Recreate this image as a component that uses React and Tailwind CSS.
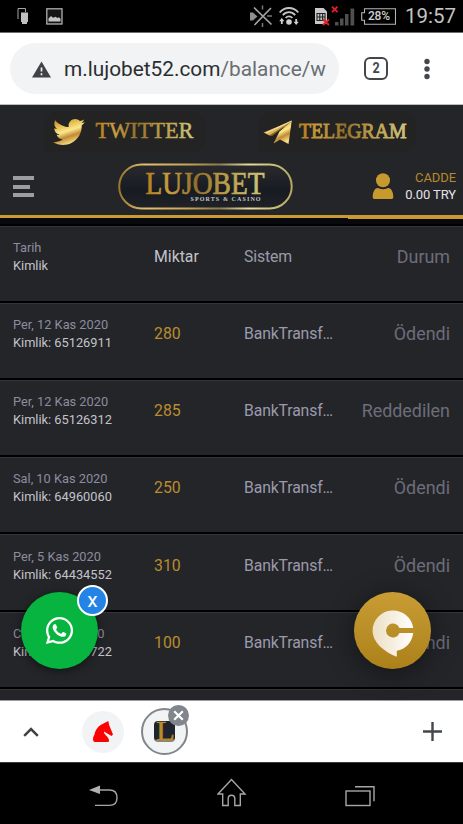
import React from 'react';
import { FaTwitter, FaWhatsapp } from 'react-icons/fa';

const transactions = [
  { date: 'Per, 12 Kas 2020', id: '65126911', amount: '280', system: 'BankTransf…', status: 'Ödendi' },
  { date: 'Per, 12 Kas 2020', id: '65126312', amount: '285', system: 'BankTransf…', status: 'Reddedilen' },
  { date: 'Sal, 10 Kas 2020', id: '64960060', amount: '250', system: 'BankTransf…', status: 'Ödendi' },
  { date: 'Per, 5 Kas 2020', id: '64434552', amount: '310', system: 'BankTransf…', status: 'Ödendi' },
  { date: 'Cum, 9 Eki 2020', id: '62518722', amount: '100', system: 'BankTransf…', status: 'Ödendi' },
];

// Shared gradients for all gold artwork
const Gradients = () => (
  <svg width="0" height="0" className="absolute">
    <defs>
      <linearGradient id="gold" x1="0" y1="0" x2="1" y2="0">
        <stop offset="0" stopColor="#b57d1e" />
        <stop offset="0.2" stopColor="#c99e40" />
        <stop offset="0.42" stopColor="#94702a" />
        <stop offset="0.65" stopColor="#b99a45" />
        <stop offset="1" stopColor="#cfc47c" />
      </linearGradient>
      <linearGradient id="goldIcon" x1="0" y1="0" x2="0.4" y2="1">
        <stop offset="0" stopColor="#b07c22" />
        <stop offset="0.3" stopColor="#e3b94c" />
        <stop offset="0.55" stopColor="#fbe88a" />
        <stop offset="0.75" stopColor="#c28a35" />
        <stop offset="1" stopColor="#f5dc85" />
      </linearGradient>
      <linearGradient id="rim" x1="0" y1="0" x2="1" y2="0">
        <stop offset="0" stopColor="#9b762c" />
        <stop offset="0.15" stopColor="#e2c070" />
        <stop offset="0.4" stopColor="#c9a550" />
        <stop offset="0.58" stopColor="#8a7a50" />
        <stop offset="0.75" stopColor="#e9dc9c" />
        <stop offset="1" stopColor="#b6a964" />
      </linearGradient>
      <linearGradient id="badge" x1="0" y1="0" x2="0" y2="1">
        <stop offset="0" stopColor="#292a2c" />
        <stop offset="0.6" stopColor="#171b22" />
        <stop offset="1" stopColor="#202226" />
      </linearGradient>
      <linearGradient id="chat" x1="0" y1="0" x2="1" y2="0">
        <stop offset="0" stopColor="#ecdfc3" />
        <stop offset="1" stopColor="#ffffff" />
      </linearGradient>
    </defs>
  </svg>
);

const StatusBar = () => (
  <div className="h-[33px] bg-black border-b border-[#6c6c6c] flex items-center shrink-0 pl-[17px] pr-[7px]">
    <svg width="12" height="18" viewBox="0 0 12 18">
      <path d="M1 12V1.5h7.5V5" fill="none" stroke="#a5a5a5" />
      <path d="M4 5.5h7V15H10v2H5v-2H4z" fill="#c0c0c0" />
    </svg>
    <svg width="17" height="17" viewBox="0 0 17 17" className="ml-[17px]">
      <rect x="0.8" y="0.8" width="15.2" height="15.2" fill="#151515" stroke="#b0b0b0" strokeWidth="1.3" />
      <path d="M2.5 13.5v-3l2.5-2.5 2 1.8 2.5-1 2 1.2 1.5-.8 1.5 1.5v2.8z" fill="#c4c4c4" />
    </svg>
    <div className="ml-auto flex items-center">
      <svg width="24" height="22" viewBox="0 0 24 22">
        <path d="M1 7.5h3L8.5 11.5 4 15.5H1z" fill="#8f8f8f" />
        <path d="M5 2.500l17.500 17M22 3L5.500 20" stroke="#a2a2a2" strokeWidth="1.7" />
        <path d="M13.5 .5v4M13.5 18v4M18 11h5" stroke="#777" strokeWidth="1.5" />
      </svg>
      <svg width="20" height="20" viewBox="0 0 20 20" className="ml-[6px]">
        <g fill="none" stroke="#c4c4c4" strokeWidth="1.8">
          <path d="M.7 6.5c5-6 13.6-6 18.6 0" />
          <path d="M3.8 9.2c3.5-4 8.900-4 12.400 0" />
          <path d="M6.600 12c2-2.300 4.800-2.300 6.800 0" />
        </g>
        <circle cx="10" cy="16" r="2.8" fill="#d0d0d0" />
        <path d="M2.800 12l-2.600 3.200h1.700V18h1.800v-2.800h1.700zM17.200 19l-2.600-3.200h1.700V13h1.800v2.800h1.700z" fill="#d0d0d0" />
      </svg>
      <svg width="43" height="22" viewBox="0 0 43 22" className="ml-[14px]">
        <path d="M2 3h8.500l3.500 3.500v12.500H2z" fill="#c8c8c8" />
        <path d="M4 8.500h8v7H4zM4 12h8M6.800 8.500v7M9.600 8.500v7" fill="none" stroke="#222" strokeWidth="1.1" />
        <path d="M10 14.500l6 5.500M16 14.500l-6 5.500M19 1.700l5.500 5.500M24.500 1.700L19 7.200" stroke="#e11f2a" strokeWidth="1.9" />
        <path d="M22 17h3.500v3.500H22zM27 13.500h3.500v7H27zM32 9h3.500v11.500H32zM37.500 3.500h3.700v17h-3.700z" fill="#4f4f4f" />
      </svg>
      <div className="relative ml-[5px] w-[35px] h-[17px]">
        <svg width="35" height="17" viewBox="0 0 35 17" className="absolute inset-0">
          <path d="M3.500.7h31v15.600h-31v-4H.7V4.700h2.800z" fill="none" stroke="#b5b5b5" strokeWidth="1.1" />
        </svg>
        <span className="absolute left-[7px] top-0 text-[12px] leading-[17px] font-medium text-[#d0d0d0] tracking-[-0.2px]">28%</span>
      </div>
      <span className="ml-[9px] text-[20.5px] leading-none text-[#c3c3c3] w-[51px] whitespace-nowrap">19:57</span>
    </div>
  </div>
);

const AddressBar = () => (
  <div className="h-[72px] bg-white border-b border-[#b9c2c0] flex items-center shrink-0 pl-[10px]">
    <div className="w-[329px] h-[51px] rounded-full bg-[#f1f3f4] flex items-center pl-[22px] overflow-hidden mb-px">
      <svg width="19" height="17" viewBox="0 0 19 17" className="mt-[2px]">
        <path d="M9.500.5L19 16.500H0z" fill="#3f4347" />
        <path d="M9.500 6.500v4M9.500 12.300v2" stroke="#f1f3f4" strokeWidth="1.7" />
      </svg>
      <span className="ml-[13px] mt-[3px] text-[20.8px] whitespace-nowrap text-[#2b2e31]">
        m.lujobet52.com<span className="text-[#6a6e73]">/balance/w</span>
      </span>
    </div>
    <div className="ml-[25px] w-[24px] h-[23px] border-[2.5px] border-[#43474b] rounded-[6px] flex items-center justify-center text-[14px] font-bold text-[#43474b]">
      <span className="scale-x-90">2</span>
    </div>
    <svg width="8" height="24" viewBox="0 0 8 24" className="ml-[35px] fill-[#43474b]">
      <circle cx="4" cy="4.5" r="2.7" />
      <circle cx="4" cy="12" r="2.7" />
      <circle cx="4" cy="19.5" r="2.7" />
    </svg>
  </div>
);

const SiteHeader = () => (
  <header className="h-[110px] bg-[#242529] shrink-0">
    <div className="h-[54px] flex pt-[6px] pl-[44px]">
      <a className="w-[162px] h-[41px] rounded-r-2xl rounded-tl-2xl bg-[#232323] flex items-center pl-[9px]">
        <FaTwitter size={32} fill="url(#goldIcon)" />
        <svg width="102" height="24" className="ml-[10px] overflow-visible">
          <text x="0.5" y="17.800" textLength="98" lengthAdjust="spacingAndGlyphs" fontSize="23.5" fontFamily="Liberation Serif, serif" fill="url(#gold)" stroke="url(#gold)" strokeWidth="0.5">TWITTER</text>
        </svg>
      </a>
      <a className="ml-[52px] w-[158px] h-[41px] rounded-r-2xl rounded-tl-2xl bg-[#232323] flex items-center pl-[5px]">
        <svg width="30" height="26" viewBox="0 0 30 26">
          <path d="M28.700 2L.5 13.500l6 3L22 7.500z" fill="#d9b45c" />
          <path d="M28.700 2L3 14" stroke="#f4dfa0" strokeWidth="1.3" />
          <path d="M28.700 2L6.500 16.500l2.500.5z" fill="#93671f" />
          <path d="M28.700 2L16.500 12.500 10.500 24.500l6.500-4 8.500 4.500z" fill="url(#goldIcon)" />
        </svg>
        <svg width="116" height="24" className="ml-[5px] overflow-visible">
          <text x="1" y="18.300" textLength="107.5" lengthAdjust="spacingAndGlyphs" fontSize="22" fontFamily="Liberation Serif, serif" fill="url(#gold)" stroke="url(#gold)" strokeWidth="0.9">TELEGRAM</text>
        </svg>
      </a>
    </div>
    <div className="h-[56px] flex items-start">
      <div className="flex flex-col gap-[4.5px] ml-[13px] mt-[17px] w-[21px]">
        <div className="h-[4px] w-[20.5px] bg-[#9c9da0]" />
        <div className="h-[4px] w-[17px] bg-[#9c9da0]" />
        <div className="h-[4px] w-[20.5px] bg-[#9c9da0]" />
      </div>
      <svg width="176" height="48" viewBox="0 0 176 48" className="ml-[84px] mt-[3px]">
        <rect x="1.2" y="2.4" width="172.5" height="44" rx="22" fill="url(#badge)" stroke="url(#rim)" strokeWidth="2" />
        <text x="27.5" y="32" textLength="119" lengthAdjust="spacingAndGlyphs" fontSize="30.5" fontFamily="Liberation Serif, serif" fill="url(#gold)" stroke="url(#gold)" strokeWidth="0.7">LUJOBET</text>
        <text x="72.5" y="38.700" textLength="70" fontSize="6" fontWeight="bold" fontFamily="Liberation Serif, serif" fill="#c6c6c6">SPORTS &amp; CASINO</text>
      </svg>
      <div className="ml-auto flex items-center mt-[11px] pr-[7px]">
        <svg width="22" height="27" viewBox="0 0 22 27" className="mr-[11px] fill-[#c79a2f]">
          <circle cx="11" cy="7.2" r="7" />
          <path d="M.7 24c0-5 2-9 5-9 1.500 0 2.500 1.300 5.300 1.300s3.800-1.300 5.300-1.300c3 0 5 4 5 9 0 1.500-.8 2-2 2H2.700c-1.200 0-2-.5-2-2z" />
        </svg>
        <div className="text-right text-[13px] leading-[16.5px] tracking-[-0.1px]">
          <div className="text-[#b8892c]">CADDE</div>
          <div className="text-[#e4e4e6]">0.00 TRY</div>
        </div>
      </div>
    </div>
  </header>
);

const Row = ({ top, bottom, amount, amountColor, system, status }) => (
  <div className="h-[77.23px] shrink-0 bg-[#242529] border-t border-t-[#343539] border-b-2 border-b-black grid grid-cols-[141px_90px_1fr_auto] px-[13px] pt-[12.3px]">
    <div className="text-[12.8px] leading-[18px]">
      <div className="text-[#8c8c9f]">{top}</div>
      <div className="text-[#c3c3c9]">{bottom}</div>
    </div>
    <div className={`text-[15.8px] leading-[36px] ${amountColor}`}>{amount}</div>
    <div className="text-[15.8px] leading-[36px] tracking-[-0.15px] text-[#9b9bab]">{system}</div>
    <div className="text-[17.9px] leading-[36px] text-[#6d6d7a]">{status}</div>
  </div>
);

const FloatingButtons = () => (
  <>
    <button className="absolute left-[21px] top-[592px] w-[77px] h-[77px] rounded-full bg-[#07b43f] shadow-[0_2px_8px_rgba(0,0,0,0.5)] flex items-center justify-center pr-px pb-px">
      <FaWhatsapp size={31} color="#fff" />
    </button>
    <button className="absolute left-[77px] top-[585px] w-[31px] h-[31px] rounded-full bg-[#2484e6] border-2 border-white text-white text-[21px] leading-none flex items-center justify-center">
      x
    </button>
    <button className="absolute left-[354px] top-[592px] w-[77px] h-[77px] rounded-full bg-linear-to-b from-[#c99d34] to-[#ad8119] shadow-[0_4px_28px_rgba(0,0,0,0.45)]">
      <svg width="77" height="77" viewBox="0 0 77 77">
        <path d="M59.200 36H45.500a7 7 0 1 0 0 5h13.700c-1.200 9.500-7.700 16.500-16.400 17.800v6C30 59.500 18.600 50.500 18.600 38.500a20.400 20.400 0 0 1 40.600-2.500z" fill="url(#chat)" />
      </svg>
    </button>
  </>
);

const TabStrip = () => (
  <div className="h-[62px] bg-white border-t border-[#9b9b9e] flex items-center shrink-0">
    <svg width="16" height="10" viewBox="0 0 16 10" className="ml-[23px]">
      <path d="M1.200 8.800L8 2l6.800 6.800" fill="none" stroke="#3f4245" strokeWidth="2.5" />
    </svg>
    <div className="ml-[43px] w-[42px] h-[42px] rounded-full bg-[#f1f3f4] flex items-center justify-center">
      <svg width="20" height="21" viewBox="0 0 20 21">
        <path d="M15.300 0l1 4.500 3.700 9-1.500 1.500L11 10.500c-.5 3.500 5 5 5 9 0 1-.5 1.500-1.500 1.500H2C.7 21 0 20 0 18c0-1.500.5-3 1.500-4.500C2.300 9 5.500 4.500 9.500 3z" fill="#fb0303" />
      </svg>
    </div>
    <div className="relative ml-[17px] w-[47px] h-[47px] rounded-full bg-[#f1f3f4] border-2 border-[#80868b] flex items-center justify-center">
      <div className="w-[21px] h-[21px] rounded-[4px] bg-[#20242c] border-b-2 border-[#8b8578] flex items-center">
        <svg width="21" height="21" className="overflow-visible">
          <text x="2" y="19.5" textLength="19" lengthAdjust="spacingAndGlyphs" fontSize="27" fontFamily="Liberation Serif, serif" fill="#b98b2b" stroke="#b98b2b" strokeWidth="0.4">L</text>
        </svg>
      </div>
      <div className="absolute left-[25px] top-[-5px] w-[21px] h-[21px] rounded-full bg-[#80868b] flex items-center justify-center">
        <svg width="11" height="11" viewBox="0 0 11 11">
          <path d="M1.200 1.200l8.600 8.600M9.800 1.200L1.200 9.800" stroke="#fff" strokeWidth="2.2" />
        </svg>
      </div>
    </div>
    <svg width="19" height="19" viewBox="0 0 19 19" className="ml-auto mr-[21px]">
      <path d="M9.500 0v19M0 9.500h19" stroke="#43474b" strokeWidth="2.4" />
    </svg>
  </div>
);

const NavBar = () => (
  <div className="h-[62px] bg-black border-t border-[#3a3a3a] flex shrink-0 items-start">
    <svg width="30" height="22" viewBox="0 0 30 22" className="ml-[89px] mt-[22px]" fill="none">
      <path d="M0 5L11 .5V9z" fill="#b2b2b2" />
      <path d="M10 5h10.500c4.500 0 7.500 2.700 7.500 7.700s-3 7.700-7.500 7.700H6" stroke="#a6a6a6" strokeWidth="1.4" />
    </svg>
    <svg width="30" height="30" viewBox="0 0 30 30" className="ml-[98px] mt-[14px]" fill="none">
      <path d="M14.500 2.500L1 17h4.700v11.500h5.500v-7a3.300 3.300 0 0 1 6.600 0v7h5.500V17H28z" stroke="#a6a6a6" strokeWidth="1.4" />
    </svg>
    <svg width="31" height="21" viewBox="0 0 31 21" className="ml-[98px] mt-[23px]" fill="none" stroke="#a6a6a6" strokeWidth="1.4">
      <rect x="1" y="5" width="24" height="14.5" />
      <path d="M10 .8h19v14.500" />
    </svg>
  </div>
);

const App = () => {
  return (
    <div className="relative w-[463px] h-[824px] overflow-hidden flex flex-col bg-black font-[Roboto,sans-serif]">
      <Gradients />
      <StatusBar />
      <AddressBar />
      <SiteHeader />

      <div className="h-[10.5px] shrink-0 bg-[#07090c] border-b-2 border-black flex items-start">
        <div className="h-[3px] w-[348px] bg-[#c99b32]" />
        <div className="h-[4px] flex-1 bg-[#c99b32]" />
      </div>

      <div className="flex-1 min-h-0 overflow-hidden flex flex-col bg-[#242529]">
        <Row top="Tarih" bottom="Kimlik" amount="Miktar" amountColor="text-[#c3c3c9]" system="Sistem" status="Durum" />
        {transactions.map((t) => (
          <Row
            key={t.id}
            top={t.date}
            bottom={`Kimlik: ${t.id}`}
            amount={t.amount}
            amountColor="text-[#b98d2d]"
            system={t.system}
            status={t.status}
          />
        ))}
        <div className="h-[20px] shrink-0 border-t border-[#343539] bg-[#242429]" />
      </div>

      <TabStrip />
      <NavBar />
      <FloatingButtons />
    </div>
  );
};

export default App;
